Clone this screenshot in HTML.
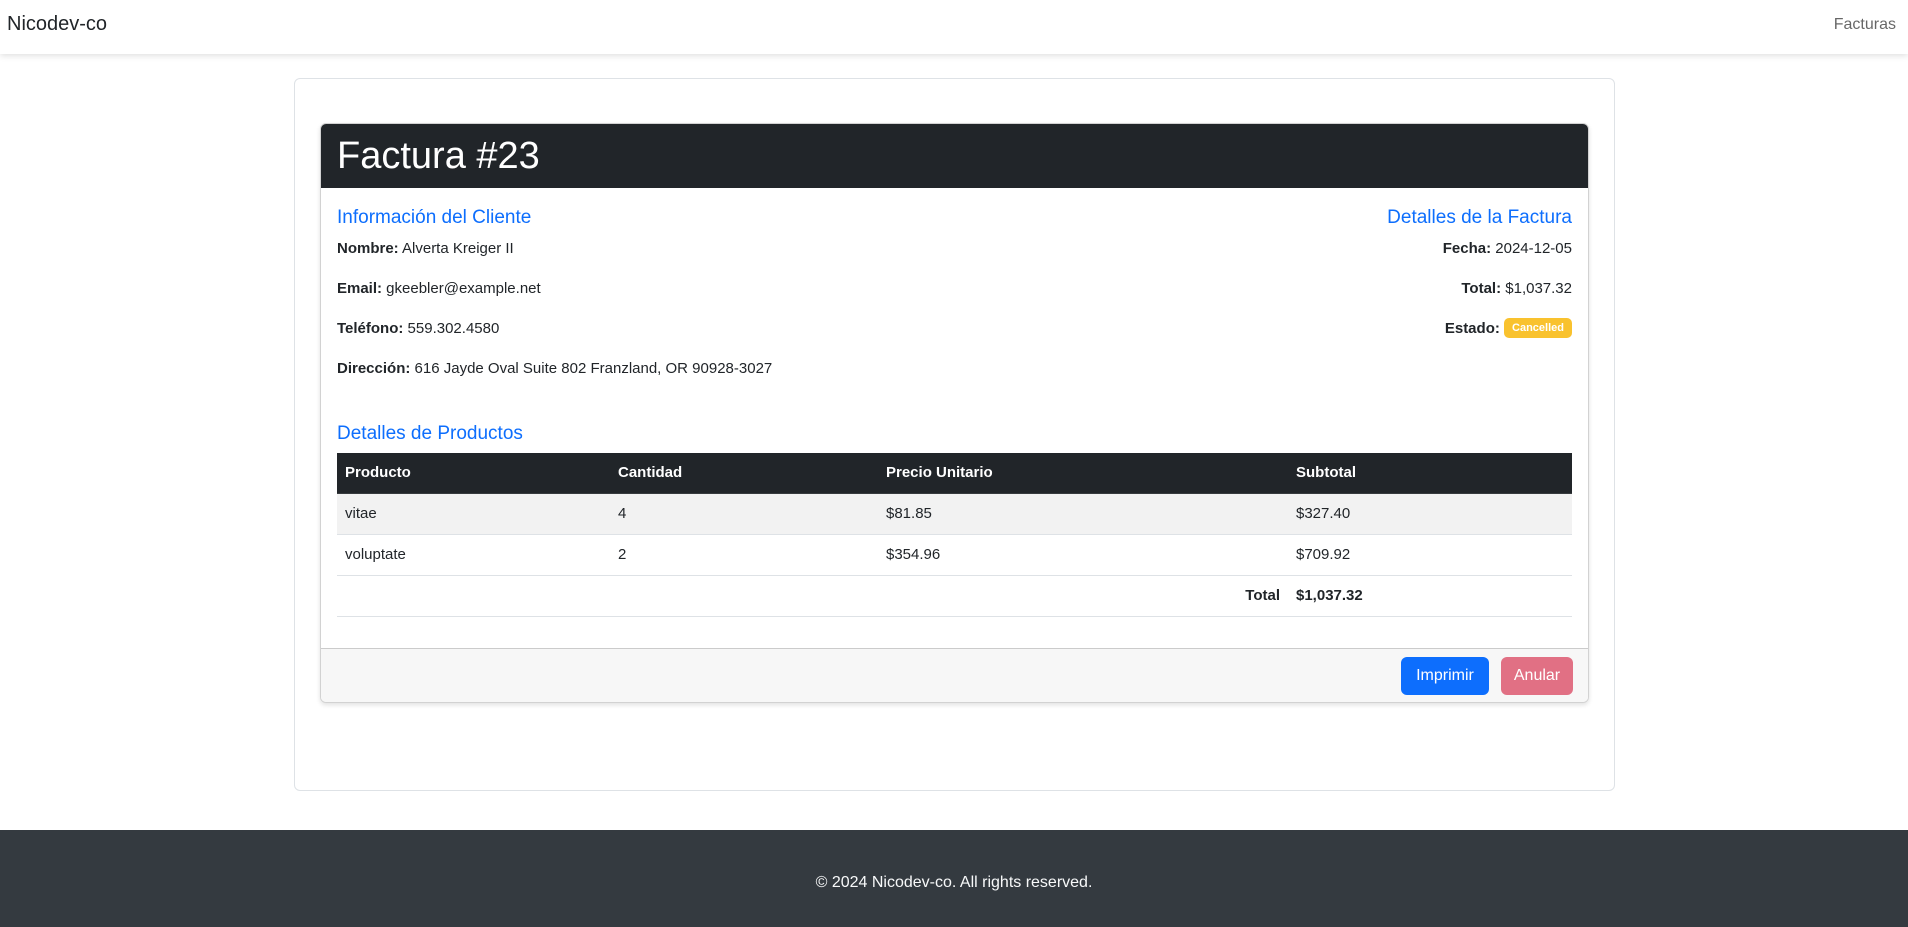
<!DOCTYPE html>
<html><head><meta charset="utf-8"><style>
*{box-sizing:border-box;margin:0;padding:0}
body{width:1908px;height:927px;position:relative;font-family:"Liberation Sans",sans-serif;font-size:16px;color:#212529;background:#fff;overflow:hidden}
.nav{position:absolute;left:0;top:0;width:1908px;height:54px;background:#fff;box-shadow:0 2px 6px rgba(0,0,0,.12)}
.brand{position:absolute;left:7px;top:13px;font-size:20px;color:#212529}
.navlink{position:absolute;right:12px;top:16px;color:rgba(0,0,0,.6);font-size:16px}
.outer{position:absolute;left:294px;top:78px;width:1321px;height:713px;border:1px solid #dee2e6;border-radius:6px}
.card{position:absolute;left:320px;top:123px;width:1269px;height:580px;border:1px solid rgba(0,0,0,.175);border-radius:6px;box-shadow:0 2px 5px rgba(0,0,0,.12);overflow:hidden}
.ch{height:64px;background:#212529;color:#fff;font-size:38px;padding:7px 16px;line-height:50px}
.h5{position:absolute;color:#0d6efd;font-size:19px}
.p{position:absolute;font-size:15px;line-height:24px}
.p b{font-weight:bold}
.badge{display:inline-block;background:#f9c22e;color:#fff;font-size:11px;font-weight:bold;border-radius:5px;padding:3px 8px;line-height:14px;vertical-align:2px}
table{position:absolute;left:16px;top:329px;width:1235px;border-collapse:collapse;font-size:15px}
td,th{height:41px;padding:0 8px;text-align:left;border-bottom:1px solid #dee2e6}
th{background:#212529;color:#fff;font-weight:bold;border-bottom-color:#373b3e;height:40px}
tr.s td{background:#f2f2f2}
.cf{position:absolute;left:0;top:524px;width:100%;height:56px;background:#f7f7f7;border-top:1px solid rgba(0,0,0,.175)}
.btn{position:absolute;top:8px;height:38px;border-radius:6px;color:#fff;font-size:16px;line-height:38px;text-align:center}
.foot{position:absolute;left:0;top:830px;width:1908px;height:97px;background:#343a40;color:#f8f9fa;text-align:center;font-size:16px;line-height:20px;padding-top:43px}
</style></head><body>
<div class="nav"><div class="brand">Nicodev-co</div><div class="navlink">Facturas</div></div>
<div class="outer"></div>
<div class="card">
<div class="ch">Factura #23</div>
<div class="h5" style="left:16px;top:83px">Información del Cliente</div>
<div class="p" style="left:16px;top:113px"><b>Nombre:</b> Alverta Kreiger II</div>
<div class="p" style="left:16px;top:153px"><b>Email:</b> gkeebler@example.net</div>
<div class="p" style="left:16px;top:193px"><b>Teléfono:</b> 559.302.4580</div>
<div class="p" style="left:16px;top:233px"><b>Dirección:</b> 616 Jayde Oval Suite 802 Franzland, OR 90928-3027</div>
<div class="h5" style="right:16px;top:83px">Detalles de la Factura</div>
<div class="p" style="right:16px;top:113px;text-align:right"><b>Fecha:</b> 2024-12-05</div>
<div class="p" style="right:16px;top:153px;text-align:right"><b>Total:</b> $1,037.32</div>
<div class="p" style="right:16px;top:193px;text-align:right"><b>Estado:</b> <span class="badge">Cancelled</span></div>
<div class="h5" style="left:16px;top:299px">Detalles de Productos</div>
<table>
<tr><th style="width:273px">Producto</th><th style="width:268px">Cantidad</th><th style="width:410px">Precio Unitario</th><th>Subtotal</th></tr>
<tr class="s"><td>vitae</td><td>4</td><td>$81.85</td><td>$327.40</td></tr>
<tr><td>voluptate</td><td>2</td><td>$354.96</td><td>$709.92</td></tr>
<tr><td colspan="3" style="text-align:right;font-weight:bold">Total</td><td style="font-weight:bold">$1,037.32</td></tr>
</table>
<div class="cf">
<div class="btn" style="left:1080px;width:88px;background:#0d6efd">Imprimir</div>
<div class="btn" style="left:1180px;width:72px;background:#e17084">Anular</div>
</div>
</div>
<div class="foot">© 2024 Nicodev-co. All rights reserved.</div>
</body></html>
